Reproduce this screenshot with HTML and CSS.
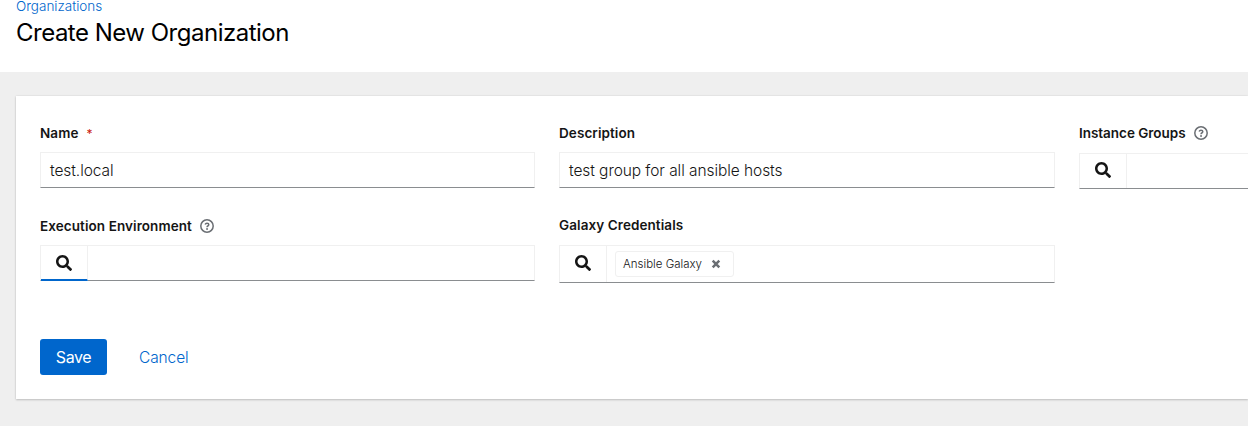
FILE: index.html
```html
<!DOCTYPE html>
<html lang="en">
<head>
<meta charset="utf-8">
<title>Create New Organization</title>
<link rel="stylesheet" href="styles.css">
</head>
<body>
<svg class="sprite" aria-hidden="true">
  <symbol id="search" viewBox="0 0 512 512"><path d="M505 442.7L405.3 343c-4.500-4.500-10.600-7-17-7H372c27.600-35.300 44-79.700 44-128C416 93.100 322.900 0 208 0S0 93.100 0 208s93.100 208 208 208c48.300 0 92.700-16.400 128-44v16.300c0 6.400 2.500 12.500 7 17l99.700 99.700c9.400 9.400 24.600 9.400 33.900 0l28.300-28.300c9.400-9.400 9.400-24.600.1-34zM208 336c-70.700 0-128-57.200-128-128 0-70.700 57.200-128 128-128 70.700 0 128 57.200 128 128 0 70.700-57.200 128-128 128z"/></symbol>
  <symbol id="help" viewBox="0 0 14 14"><circle cx="7" cy="7" r="6.200" fill="none" stroke="currentColor" stroke-width="1.500"/><path d="M5.100 5.600Q5.600 4.150 7 4.150Q8.800 4.150 8.800 5.600Q8.800 6.450 7.800 7Q7.050 7.400 7.050 8.150" fill="none" stroke="currentColor" stroke-width="1.500"/><circle cx="7.050" cy="10" r=".95"/></symbol>
  <symbol id="close" viewBox="0 0 10 10"><path d="M1.700 1.700L8.300 8.300M8.300 1.700L1.700 8.300" fill="none" stroke="currentColor" stroke-width="2.500"/></symbol>
</svg>
<header class="page-header">
  <a class="breadcrumb">Organizations</a>
  <h1 class="title">Create New Organization</h1>
</header>
<main class="card">
  <form class="form">
    <div class="group">
      <div class="label"><span>Name</span><span class="required">*</span></div>
      <div class="control text">test.local</div>
    </div>
    <div class="group">
      <div class="label">Description</div>
      <div class="control text">test group for all ansible hosts</div>
    </div>
    <div class="group instance">
      <div class="label"><span>Instance Groups</span><svg class="help"><use href="#help"/></svg></div>
      <div class="control"><span class="lookup"><svg class="search"><use href="#search"/></svg></span></div>
    </div>
    <div class="group execution">
      <div class="label"><span>Execution Environment</span><svg class="help"><use href="#help"/></svg></div>
      <div class="control"><span class="lookup focused"><svg class="search"><use href="#search"/></svg></span></div>
    </div>
    <div class="group galaxy">
      <div class="label">Galaxy Credentials</div>
      <div class="control chips"><span class="lookup"><svg class="search"><use href="#search"/></svg></span><span class="chip"><span>Ansible Galaxy</span><svg class="close"><use href="#close"/></svg></span></div>
    </div>
  </form>
  <div class="actions">
    <button class="save" type="button">Save</button>
    <a class="cancel">Cancel</a>
  </div>
</main>
</body>
</html>
```
FILE: styles.css
```css
* { box-sizing: border-box; }
body { margin: 0; height: 426px; background: #efefef; color: #151515; font-family: Inter, sans-serif; }
.sprite { display: none; }
svg { fill: currentColor; flex: none; }
.page-header { display: flex; flex-direction: column; align-items: flex-start; height: 72px; padding-left: 16px; background: #fff; }
.breadcrumb { height: 13px; font-size: 13.500px; font-weight: 300; line-height: 13px; letter-spacing: -.01px; color: #06c; white-space: nowrap; }
.title { margin: 5px 0 0; font-size: 24px; line-height: 30px; font-weight: 400; letter-spacing: -.5px; color: #000; white-space: nowrap; }
.card { height: 303px; margin: 24px 0 0 16px; padding: 24px 0 24px 24px; background: #fff; box-shadow: 0 1px 2px rgba(3,3,3,.18), 0 0 2px rgba(3,3,3,.1); clip-path: inset(-4px 0 -4px -4px); }
.form { display: grid; grid-template-columns: 495px 496px 1fr; column-gap: 24px; grid-template-rows: 93px 94px; align-items: start; }
.label { display: flex; align-items: center; height: 26px; margin-bottom: 6px; font-size: 13.500px; font-weight: 600; letter-spacing: .08px; color: #151515; white-space: nowrap; }
.required { margin-left: 8px; color: #c9190b; font-size: 12px; font-weight: 400; }
.help { width: 14px; height: 14px; margin-left: 8px; color: #6a6e73; }
.instance .label { margin-bottom: 7px; letter-spacing: -.03px; }
.instance .control { border-right: 0; }
.galaxy .label { height: 24px; margin-bottom: 8px; }
.control { display: flex; height: 36px; border: 1px solid #f0f0f0; border-bottom-color: #8a8d90; background: #fff; }
.text { align-items: center; padding-left: 9px; font-size: 15.500px; font-weight: 300; letter-spacing: -.07px; white-space: nowrap; }
.lookup { display: flex; align-items: center; justify-content: center; width: 47px; height: 34px; padding-bottom: 2px; border-right: 1px solid #f0f0f0; }
.focused { height: 35px; border-bottom: 2px solid #06c; padding-bottom: 0; }
.search { width: 16px; height: 16px; }
.chips { height: 38px; }
.chips .lookup { height: 36px; }
.chip { display: flex; align-items: center; width: 119px; height: 26px; margin: 5px 0 0 8px; padding-left: 7px; border: 1px solid #f0f0f0; border-radius: 3px; font-size: 11.500px; font-weight: 300; white-space: nowrap; }
.close { width: 10px; height: 10px; margin-left: 9px; color: #6a6e73; }
.actions { display: flex; align-items: center; margin-top: 32px; font-size: 16px; }
.save { width: 67px; height: 36px; padding: 0; border: 0; border-radius: 3px; background: #06c; color: #fff; font: inherit; letter-spacing: -.4px; }
.cancel { margin-left: 32px; color: #06c; font-size: 15.500px; font-weight: 300; letter-spacing: -.1px; }
```
